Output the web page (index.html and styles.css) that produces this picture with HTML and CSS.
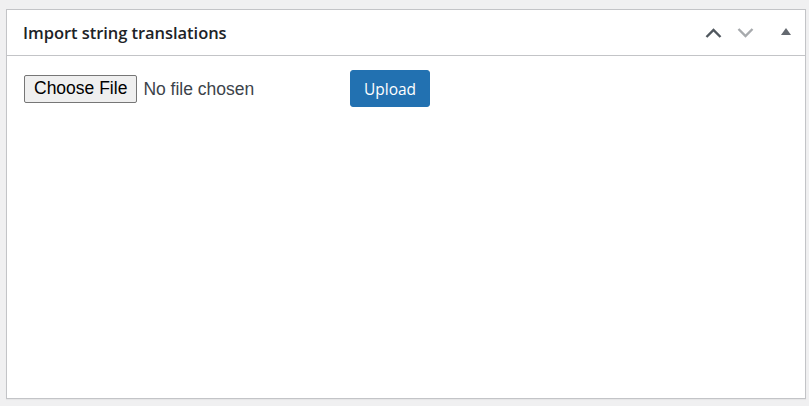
FILE: index.html
```html
<!DOCTYPE html>
<html>
<head>
<meta charset="utf-8">
<link rel="stylesheet" href="styles.css">
</head>
<body>
<div class="postbox">
  <div class="postbox-header">
    <h2 class="title">Import string translations</h2>
    <div class="handle-actions">
      <button class="icon-btn up" aria-label="Move up">
        <svg width="17" height="10" viewBox="0 0 17 10"><polyline points="1.5,9 8.5,2 15.5,9" fill="none" stroke="currentColor" stroke-width="2.4"/></svg>
      </button>
      <button class="icon-btn down" aria-label="Move down">
        <svg width="17" height="10" viewBox="0 0 17 10"><polyline points="1.5,1 8.5,8 15.5,1" fill="none" stroke="currentColor" stroke-width="2.4"/></svg>
      </button>
      <button class="icon-btn toggle" aria-label="Toggle panel">
        <svg width="10" height="7" viewBox="0 0 10 7"><polygon points="5,0 10,7 0,7" fill="currentColor"/></svg>
      </button>
    </div>
  </div>
  <div class="inside">
    <input class="file-input" type="file">
    <button class="upload-btn">Upload</button>
  </div>
</div>
</body>
</html>
```
FILE: styles.css
```css
html, body {
  margin: 0;
  padding: 0;
  background: #f0f0f1;
}
body {
  padding: 9px 3px 7px 6px;
  font-family: "Open Sans", "Noto Sans", sans-serif;
}
.postbox {
  background: #fff;
  border: 1px solid #c3c4c7;
  height: 388px;
  box-shadow: 0 1px 1px rgba(0,0,0,0.04);
}
.postbox-header {
  display: flex;
  align-items: center;
  justify-content: space-between;
  height: 45px;
  border-bottom: 1px solid #c3c4c7;
  padding: 0 14px 0 16px;
}
.title {
  margin: 0;
  font-size: 16.5px;
  font-weight: 600;
  color: #1d2327;
  letter-spacing: -0.05px;
}
.handle-actions {
  display: flex;
  align-items: center;
}
.icon-btn {
  border: 0;
  background: none;
  padding: 0;
  display: flex;
  align-items: center;
  justify-content: center;
  height: 36px;
}
.icon-btn.up { color: #50575e; width: 17px; }
.icon-btn.down { color: #a7aaad; width: 17px; margin-left: 15px; }
.icon-btn.toggle { color: #646970; width: 10px; margin-left: 27px; margin-top: -2px; }
.inside {
  display: flex;
  align-items: center;
  padding: 14px 17px;
}
.file-input {
  width: 326px;
  font-family: "Liberation Sans", Arial, sans-serif;
  font-size: 17.5px;
  color: #3c434a;
}
.file-input::file-selector-button {
  font-family: "Liberation Sans", Arial, sans-serif;
  font-size: 17.5px;
  color: #000;
  background: #efefef;
  border: 1px solid #767676;
  border-radius: 2px;
  padding: 2px 9px;
  margin: 0 6px 0 0;
  height: 28px;
}
.upload-btn {
  width: 80px;
  height: 37px;
  background: #2271b1;
  border: 1px solid #2271b1;
  border-radius: 3px;
  color: #fff;
  font-family: "Open Sans", "Noto Sans", sans-serif;
  font-size: 15.5px;
  padding: 0;
}
```
